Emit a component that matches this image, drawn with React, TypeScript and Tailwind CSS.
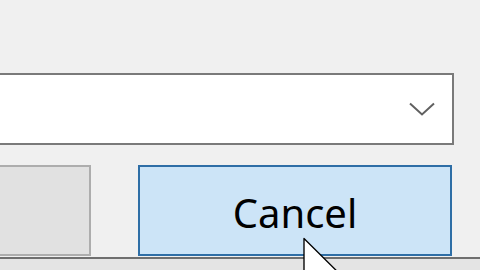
export default function App() {
  return (
    <div
      className="relative w-[480px] h-[270px] overflow-hidden bg-[#f0f0f0] flex flex-col pt-[73px]"
      style={{ fontFamily: '"Noto Sans", "Open Sans", sans-serif' }}
    >
      {/* Combo box */}
      <div className="ml-[-10px] w-[464px] h-[72px] shrink-0 border-2 border-[#7a7a7a] bg-white flex items-center justify-end pr-[17px]">
        <svg width="26" height="14" viewBox="0 0 26 14" fill="none">
          <path d="M1 1.5 L13 12.5 L25 1.5" stroke="#606060" strokeWidth="2" />
        </svg>
      </div>

      {/* Buttons */}
      <div className="mt-[20px] flex h-[91px] shrink-0">
        <div className="ml-[-10px] w-[101px] border-2 border-[#adadad] bg-[#e1e1e1]" />
        <button className="ml-[47px] w-[314px] border-2 border-[#2e6ea6] bg-[#cce4f7] flex items-center justify-center pt-[5px] text-[40px] leading-none text-black">
          Cancel
        </button>
      </div>

      {/* Bottom edge */}
      <div className="mt-[1px] h-[2px] shrink-0 bg-[#6f6f6f]" />
      <div className="flex-1 bg-[#e4e4e4]" />

      {/* Mouse cursor */}
      <svg
        className="absolute left-[302px] top-[237px]"
        width="40"
        height="60"
        viewBox="0 0 13 20"
      >
        <path
          d="M0.5 0.5 L0.5 16 L4.3 12.3 L7 18.5 L9.2 17.5 L6.6 11.4 L11.5 11.4 Z"
          fill="#fff"
          stroke="#000"
          strokeWidth="0.45"
          strokeLinejoin="round"
        />
      </svg>
    </div>
  );
}
